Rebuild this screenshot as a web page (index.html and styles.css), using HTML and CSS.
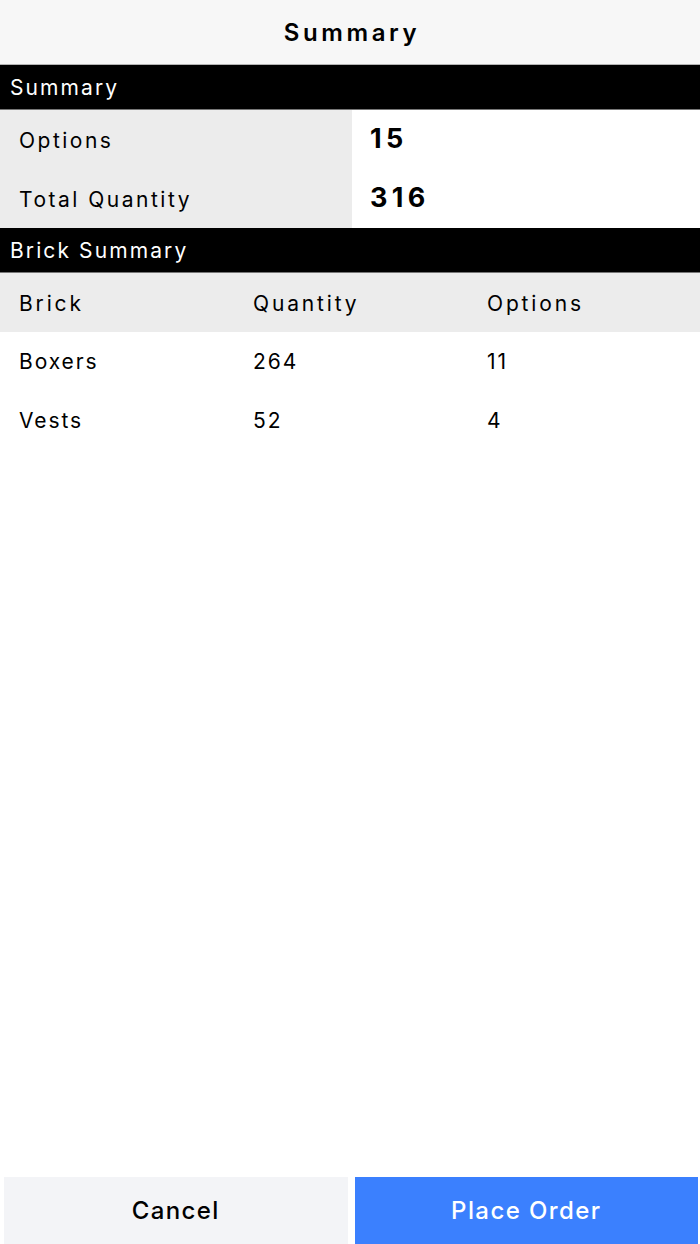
FILE: index.html
```html
<!DOCTYPE html>
<html>
<head>
<meta charset="utf-8">
<link rel="stylesheet" href="styles.css">
</head>
<body>
<div class="screen">
  <header class="nav">Summary</header>
  <div class="bar">Summary</div>
  <div class="kv">
    <div class="kv-row"><div class="kv-label">Options</div><div class="kv-value">15</div></div>
    <div class="kv-row"><div class="kv-label">Total Quantity</div><div class="kv-value">316</div></div>
  </div>
  <div class="bar">Brick Summary</div>
  <div class="table">
    <div class="trow thead"><div>Brick</div><div>Quantity</div><div>Options</div></div>
    <div class="trow"><div>Boxers</div><div>264</div><div>11</div></div>
    <div class="trow"><div>Vests</div><div>52</div><div>4</div></div>
  </div>
  <footer class="actions">
    <button class="btn btn-cancel">Cancel</button>
    <button class="btn btn-primary">Place Order</button>
  </footer>
</div>
</body>
</html>
```
FILE: styles.css
```css
* { box-sizing: border-box; }
html, body { margin: 0; padding: 0; }
body {
  font-family: Inter, "Noto Sans", "Liberation Sans", sans-serif;
  color: #000;
  background: #fff;
}
.screen {
  width: 700px;
  height: 1244px;
  display: flex;
  flex-direction: column;
}
.nav {
  height: 65px;
  background: #f7f7f7;
  border-bottom: 1px solid #b4b4b4;
  display: flex;
  align-items: center;
  justify-content: center;
  font-size: 24px;
  font-weight: 600;
  letter-spacing: 3.6px;
  padding-left: 4px;
  padding-top: 1px;
}
.bar {
  height: 45px;
  background: #000;
  color: #fff;
  border-bottom: 1px solid #777;
  display: flex;
  align-items: center;
  padding-left: 10px;
  font-size: 21px;
  letter-spacing: 2.1px;
  padding-top: 1px;
}
.kv-row {
  display: grid;
  grid-template-columns: 352px 1fr;
  height: 59px;
}
.kv-label {
  background: #ececec;
  display: flex;
  align-items: center;
  padding-left: 19px;
  font-size: 21px;
  letter-spacing: 2.5px;
  padding-top: 1px;
}
.kv-value {
  display: flex;
  align-items: center;
  padding-left: 18px;
  font-size: 27px;
  font-weight: 700;
  letter-spacing: 4.4px;
  padding-bottom: 2px;
}
.trow {
  display: grid;
  grid-template-columns: 234px 234px 1fr;
  height: 59px;
  align-items: center;
  padding-left: 19px;
  font-size: 21px;
  letter-spacing: 1.9px;
}
.thead {
  background: #ececec;
  letter-spacing: 2.85px;
  padding-top: 2px;
}
.actions {
  margin-top: auto;
  display: flex;
  gap: 7px;
  padding: 0 2px 0 4px;
}
.btn {
  flex: 1;
  height: 67px;
  border: none;
  font-family: inherit;
  font-size: 24px;
  font-weight: 500;
  letter-spacing: 1.4px;
  padding: 0;
}
.btn-cancel {
  background: #f3f4f7;
  color: #000;
}
.btn-primary {
  background: #3b80fe;
  color: #fff;
}
```
